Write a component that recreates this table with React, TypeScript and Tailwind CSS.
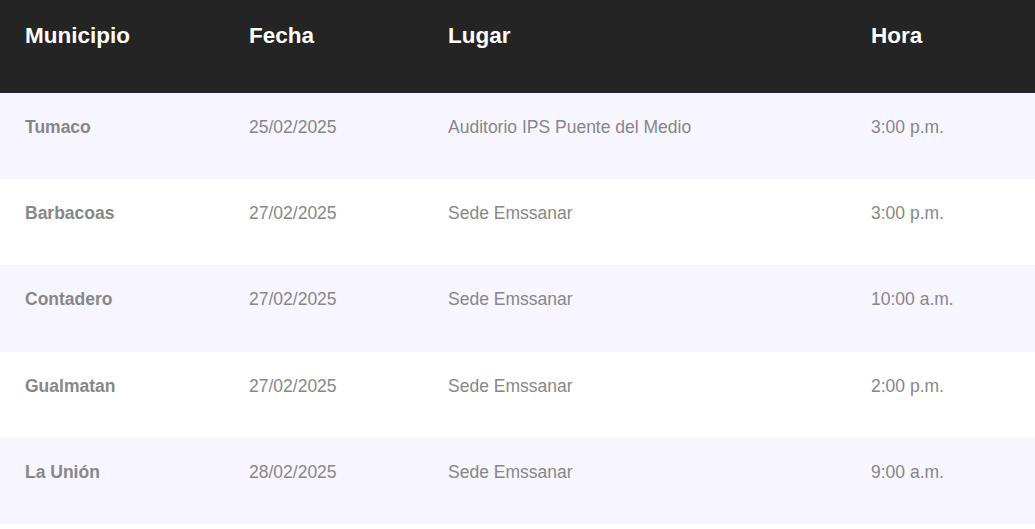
const rows = [
  { municipio: "Tumaco", fecha: "25/02/2025", lugar: "Auditorio IPS Puente del Medio", hora: "3:00 p.m." },
  { municipio: "Barbacoas", fecha: "27/02/2025", lugar: "Sede Emssanar", hora: "3:00 p.m." },
  { municipio: "Contadero", fecha: "27/02/2025", lugar: "Sede Emssanar", hora: "10:00 a.m." },
  { municipio: "Gualmatan", fecha: "27/02/2025", lugar: "Sede Emssanar", hora: "2:00 p.m." },
  { municipio: "La Unión", fecha: "28/02/2025", lugar: "Sede Emssanar", hora: "9:00 a.m." },
];

const cols = "grid grid-cols-[224px_199px_423px_189px]";

export default function App() {
  return (
    <div
      className="w-[1035px] min-h-[529px] bg-white"
      style={{ fontFamily: '"Liberation Sans", Arial, sans-serif' }}
    >
      <div className={`${cols} h-[93px] bg-[#242424] text-white text-[22.5px] font-bold leading-[22px]`}>
        <div className="pl-[25px] pt-[25px]">Municipio</div>
        <div className="pl-[25px] pt-[25px]">Fecha</div>
        <div className="pl-[25px] pt-[25px]">Lugar</div>
        <div className="pl-[25px] pt-[25px]">Hora</div>
      </div>
      {rows.map((r, i) => (
        <div
          key={r.municipio}
          className={`${cols} h-[86.2px] text-[17.5px] leading-[20px] text-[#878787] ${
            i % 2 === 0 ? "bg-[#f7f5ff]" : "bg-white"
          }`}
        >
          <div className="pl-[25px] pt-[24px] font-bold">{r.municipio}</div>
          <div className="pl-[25px] pt-[24px]">{r.fecha}</div>
          <div className="pl-[25px] pt-[24px]">{r.lugar}</div>
          <div className="pl-[25px] pt-[24px]">{r.hora}</div>
        </div>
      ))}
    </div>
  );
}
